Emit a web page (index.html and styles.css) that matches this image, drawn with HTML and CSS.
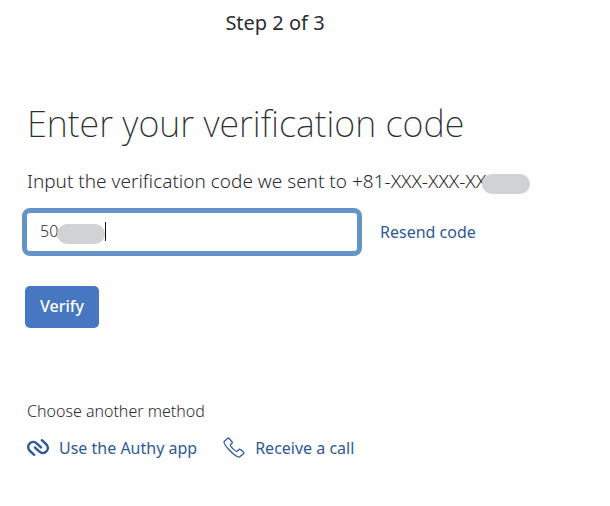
FILE: index.html
```html
<!DOCTYPE html>
<html lang="en">
<head>
<meta charset="UTF-8">
<meta name="viewport" content="width=device-width, initial-scale=1.0">
<title>Verification</title>
<link rel="stylesheet" href="styles.css">
</head>
<body>
<header class="step">Step 2 of 3</header>
<main class="content">
    <h1>Enter your verification code</h1>
    <form class="verify-form">
        <label class="hint" for="code">Input the verification code we sent to <span class="phone">+81-XXX-XXX-XX<span class="mask"></span></span></label>
        <div class="code-row">
            <div class="code-field">
                <input type="text" id="code" value="50" inputmode="numeric" autocomplete="off">
                <span class="mask"></span>
                <span class="caret"></span>
            </div>
            <a href="#">Resend code</a>
        </div>
        <button type="submit">Verify</button>
    </form>
    <section class="methods">
        <p>Choose another method</p>
        <div class="method-list">
            <a href="#">
                <svg width="22" height="22" viewBox="0 0 22 22" fill="none" stroke="currentColor" stroke-width="2.4" stroke-linecap="round">
                    <path d="M7.2 17.8L3 14C.6 11.8.6 8.6 2.6 6.6C4.6 4.6 7.6 4.5 9.6 6.3L14 10.4"/>
                    <path d="M14.8 3.2L19 7C21.4 9.2 21.4 12.4 19.4 14.4C17.4 16.4 14.4 16.5 12.4 14.7L8 10.6"/>
                </svg>
                Use the Authy app
            </a>
            <a href="#">
                <svg width="22" height="22" viewBox="0 0 22 22" fill="none" stroke="currentColor" stroke-width="1.3" stroke-linejoin="round">
                    <path d="M4.8 1.2L1.2 4.4C.6 5.5 2 8.5 6.5 13.3C11 17.8 14.8 20.6 16.5 20L20.7 16.4C21.1 16 21 15.5 20.6 15.1L17.4 12.5C16.9 12.2 16.4 12.2 16 12.6L14 14.4C13.3 14.8 11.6 13.4 9.8 11.6C8 9.8 6.9 8.4 7.3 7.9L9 6.2C9.4 5.8 9.4 5.4 9.1 4.9L6.2 1.5C5.8 1 5.2 .9 4.8 1.2Z"/>
                </svg>
                Receive a call
            </a>
        </div>
    </section>
</main>
</body>
</html>
```
FILE: styles.css
```css
* {
    box-sizing: border-box;
}
body {
    margin: 0;
    padding: 9px 60px 24px 0;
    background-color: #fefefe;
    color: #2b2d30;
    font-family: "Noto Sans", "Open Sans", sans-serif;
    font-size: 16px;
    font-weight: 300;
    line-height: 24px;
}
h1 {
    margin: 0;
    font-size: 36px;
    font-weight: 200;
    line-height: 48px;
}
p {
    margin: 0;
}
a {
    color: #2f5a94;
    font-weight: 400;
    text-decoration: none;
}
a:hover {
    text-decoration: underline;
}
.step {
    font-size: 20px;
    font-weight: 400;
    line-height: 28px;
    text-align: center;
}
.content {
    padding: 63px 0 0 27px;
}
.verify-form {
    margin-top: 19px;
}
.hint {
    display: block;
    font-size: 19px;
    line-height: 28px;
    white-space: nowrap;
}
.phone {
    position: relative;
}
.mask {
    position: absolute;
    width: 48px;
    height: 20px;
    border-radius: 10px;
    background-color: #d1d2d4;
}
.phone .mask {
    top: 6px;
    left: 100%;
    margin-left: -4px;
}
.code-row {
    display: flex;
    align-items: center;
    gap: 18px;
    margin: 13px 0 30px -5px;
}
.code-field {
    position: relative;
    flex: 0 1 340px;
}
.code-field input {
    display: block;
    width: 100%;
    height: 48px;
    padding: 0 13px 2px;
    border: 5px solid #6593c5;
    border-radius: 8px;
    outline: none;
    background-color: #fff;
    color: inherit;
    font: inherit;
}
.code-field .mask {
    top: 16px;
    left: 35px;
}
.caret {
    position: absolute;
    top: 14px;
    left: 83px;
    width: 1px;
    height: 19px;
    background-color: #111;
}
button {
    display: block;
    height: 42px;
    margin-left: -2px;
    padding: 0 15px 2px;
    border: none;
    border-radius: 5px;
    background-color: #4677c0;
    color: #fff;
    font: inherit;
    font-weight: 500;
    cursor: pointer;
}
.methods {
    margin-top: 71px;
}
.method-list {
    display: flex;
    flex-wrap: wrap;
    gap: 26px;
    margin-top: 13px;
}
.method-list a {
    display: flex;
    align-items: center;
    gap: 10px;
}
```
